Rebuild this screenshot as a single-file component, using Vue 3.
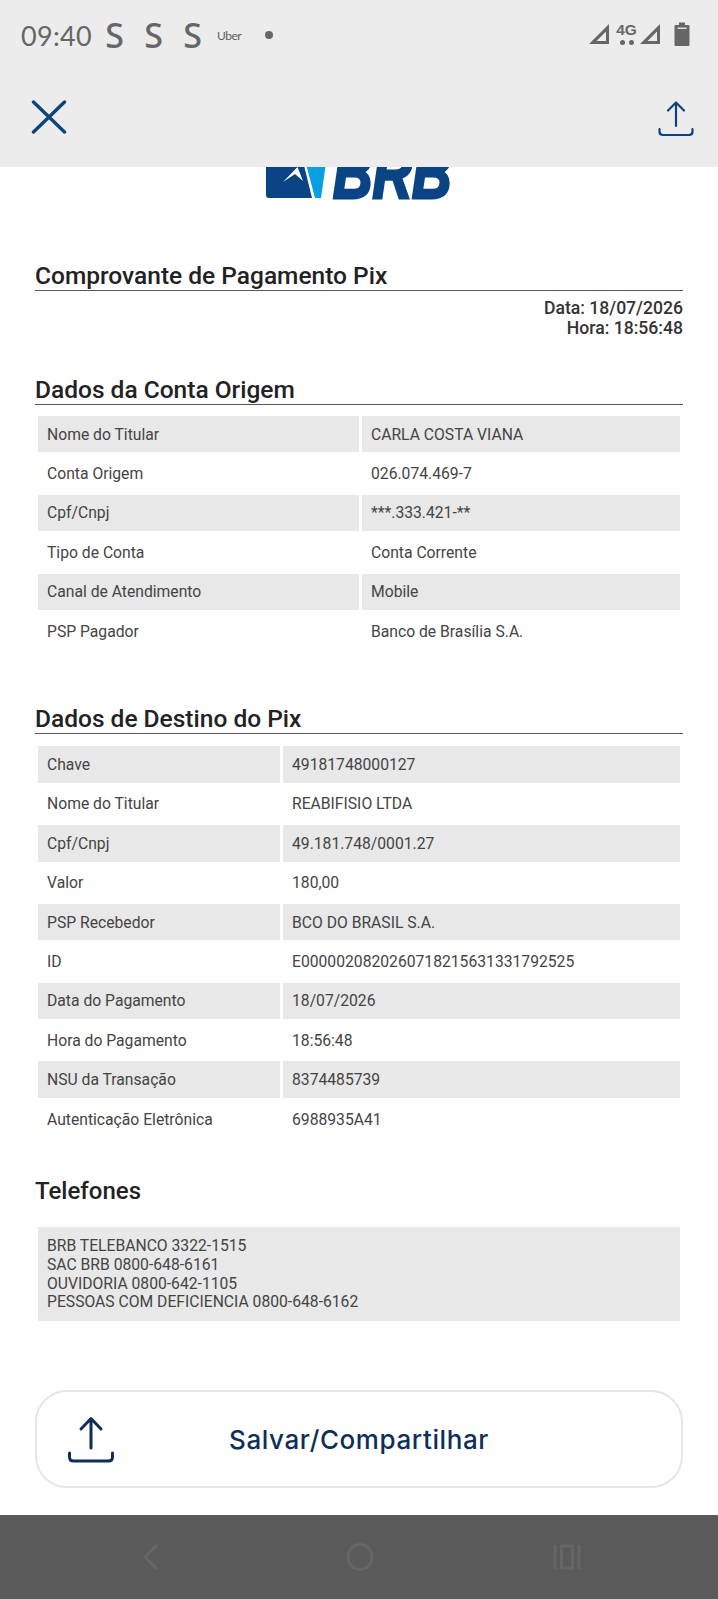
<script setup>
const origem = [
  ['Nome do Titular', 'CARLA COSTA VIANA'],
  ['Conta Origem', '026.074.469-7'],
  ['Cpf/Cnpj', '***.333.421-**'],
  ['Tipo de Conta', 'Conta Corrente'],
  ['Canal de Atendimento', 'Mobile'],
  ['PSP Pagador', 'Banco de Brasília S.A.'],
]
const destino = [
  ['Chave', '49181748000127'],
  ['Nome do Titular', 'REABIFISIO LTDA'],
  ['Cpf/Cnpj', '49.181.748/0001.27'],
  ['Valor', '180,00'],
  ['PSP Recebedor', 'BCO DO BRASIL S.A.'],
  ['ID', 'E0000020820260718215631331792525'],
  ['Data do Pagamento', '18/07/2026'],
  ['Hora do Pagamento', '18:56:48'],
  ['NSU da Transação', '8374485739'],
  ['Autenticação Eletrônica', '6988935A41'],
]
const telefones = [
  'BRB TELEBANCO 3322-1515',
  'SAC BRB 0800-648-6161',
  'OUVIDORIA 0800-642-1105',
  'PESSOAS COM DEFICIENCIA 0800-648-6162',
]
</script>

<template>
  <div class="screen">
    <header class="top">
      <div class="status">
        <span class="time">09:40</span>
        <span class="s first">S</span>
        <span class="s">S</span>
        <span class="s">S</span>
        <span class="uber">Uber</span>
        <span class="dot"></span>
        <span class="spacer"></span>
        <svg class="sig" width="22" height="22" viewBox="0 0 22 22"><path d="M21 1V21H1Z M18 8.500L8.500 18H18Z" fill="#666" fill-rule="evenodd"/></svg>
        <span class="net"><span class="g">4G</span><span class="arrows"><i></i><i></i></span></span>
        <svg class="sig" width="22" height="22" viewBox="0 0 22 22"><path d="M21 1V21H1Z M18 8.500L8.500 18H18Z" fill="#666" fill-rule="evenodd"/></svg>
        <svg class="bat" width="16" height="24" viewBox="0 0 16 24"><path d="M5 0.500H11V3H14.500Q15.500 3 15.500 4V23Q15.500 24 14.500 24H1.500Q0.500 24 0.500 23V4Q0.500 3 1.500 3H5Z" fill="#666"/><rect x="3.500" y="5.500" width="9" height="1.500" fill="#ddd"/></svg>
      </div>
      <div class="toolbar">
        <svg width="36" height="34" viewBox="0 0 36 34"><path d="M2.500 2L33.500 32M33.500 2L2.500 32" stroke="#0f4379" stroke-width="3.400" stroke-linecap="round" fill="none"/></svg>
        <svg width="36" height="37" viewBox="0 0 36 37"><path d="M18 3V26M10 10.500L18 2.500L26 10.500M1.500 29V31.500Q1.500 35 5 35H31Q34.500 35 34.500 31.500V29" stroke="#0f4379" stroke-width="2.200" stroke-linecap="round" stroke-linejoin="round" fill="none"/></svg>
      </div>
    </header>

    <main class="content">
      <div class="logo">
        <svg class="mark" width="62" height="50" viewBox="0 0 62 50">
          <path d="M3 0H34L46 49H3Q0 49 0 46V18Z" fill="#0a4484"/>
          <path d="M17 33L31.500 18L37 32L29 25Z" fill="#fff"/>
          <path d="M36 0H62L55 49H49Z" fill="#0a9fe2"/>
        </svg>
        <span class="letters">BRB</span>
      </div>

      <h2 class="title first">Comprovante de Pagamento Pix</h2>
      <div class="stamp">
        <div>Data: 18/07/2026</div>
        <div>Hora: 18:56:48</div>
      </div>

      <h2 class="title second">Dados da Conta Origem</h2>
      <div class="rows half">
        <div v-for="(r, i) in origem" :key="i" class="row" :class="{ shaded: i % 2 === 0 }">
          <div class="cell">{{ r[0] }}</div>
          <div class="cell">{{ r[1] }}</div>
        </div>
      </div>

      <h2 class="title third">Dados de Destino do Pix</h2>
      <div class="rows narrow">
        <div v-for="(r, i) in destino" :key="i" class="row" :class="{ shaded: i % 2 === 0 }">
          <div class="cell">{{ r[0] }}</div>
          <div class="cell">{{ r[1] }}</div>
        </div>
      </div>

      <h2 class="title plain">Telefones</h2>
      <div class="phones">
        <div v-for="t in telefones" :key="t">{{ t }}</div>
      </div>

      <button class="share">
        <svg class="share-icon" width="46" height="47" viewBox="0 0 46 47"><path d="M23 3V32M13 13L23 2.500L33 13M1.500 37V41Q1.500 45 5.500 45H40.500Q44.500 45 44.500 41V37" stroke="#0f2f57" stroke-width="3" stroke-linecap="round" stroke-linejoin="round" fill="none"/></svg>
        <span>Salvar/Compartilhar</span>
      </button>
    </main>

    <footer class="nav">
      <svg class="back" width="18" height="28" viewBox="0 0 18 28"><path d="M15 2L3 14L15 26" stroke="#666" stroke-width="3" fill="none"/></svg>
      <svg class="home" width="28" height="28" viewBox="0 0 28 28"><ellipse cx="14" cy="14" rx="12" ry="12.500" stroke="#666" stroke-width="3" fill="none"/></svg>
      <svg class="recent" width="28" height="26" viewBox="0 0 28 26"><path d="M2 1V25M26 1V25" stroke="#666" stroke-width="3" fill="none"/><rect x="8.500" y="2" width="11" height="22" stroke="#666" stroke-width="3" fill="none"/></svg>
    </footer>
  </div>
</template>

<style>
html, body { margin: 0; background: #fff; }
</style>

<style scoped>
.screen {
  width: 718px;
  height: 1599px;
  display: flex;
  flex-direction: column;
  overflow: hidden;
  font-family: Roboto, "Liberation Sans", sans-serif;
  background: #fff;
}
.top {
  height: 167px;
  background: #ececec;
  flex: none;
  position: relative;
  z-index: 2;
}
.status {
  height: 70px;
  padding: 0 28px 0 21px;
  display: flex;
  align-items: center;
  color: #666;
  font-family: Lato, sans-serif;
}
.time { font-size: 27px; font-weight: 400; width: 71px; letter-spacing: .3px; }
.s { font-size: 34px; font-weight: 500; width: 39px; text-align: center; font-family: "Noto Sans", sans-serif; }
.s.first { margin-left: 3px; }
.uber { font-size: 12px; width: 26px; margin-left: 5px; letter-spacing: -.5px; color: #5c5c5c; }
.dot { width: 8px; height: 8px; border-radius: 50%; background: #666; margin-left: 22px; }
.spacer { flex: 1; }
.sig { margin-top: -2px; }
.net { display: flex; flex-direction: column; align-items: center; width: 29px; box-sizing: border-box; padding-left: 4px; margin-top: -2px; }
.g { font: 700 15.500px/14px "Liberation Sans", sans-serif; }
.arrows { display: flex; gap: 4px; margin-top: 3px; }
.arrows i { width: 5px; height: 5px; background: #666; border-radius: 50%; }
.bat { margin-left: 13px; margin-top: -2px; }
.toolbar {
  height: 97px;
  padding: 0 24px 0 31px;
  display: flex;
  align-items: flex-start;
  justify-content: space-between;
}
.toolbar svg { margin-top: 30px; }
.content {
  flex: 1;
  padding: 0 35px;
  display: flex;
  flex-direction: column;
  min-height: 0;
}
.logo {
  margin: -18px 0 0 231px;
  display: flex;
  align-items: flex-end;
  height: 50px;
  gap: 5px;
}
.mark { flex: none; }
.letters {
  font: italic 700 72px/50px "Liberation Sans", sans-serif;
  color: #0a4484;
  -webkit-text-stroke: 3px #0a4484;
  height: 50px;
  transform: scaleX(.76);
  transform-origin: left bottom;
  display: block;
  margin-bottom: 1px;
}
.title {
  margin: 0;
  height: 32px;
  line-height: 33px;
  font-size: 24.500px;
  font-weight: 500;
  color: #222;
  border-bottom: 1px solid #555;
  box-sizing: border-box;
}
.title.first { margin-top: 60px; }
.title.second { margin-top: 35px; }
.title.third { margin-top: 53px; }
.title.plain { border: 0; margin-top: 39px; height: auto; font-size: 24px; line-height: 30px; }
.stamp {
  margin-top: 7px;
  text-align: right;
  font-size: 17.600px;
  line-height: 20px;
  font-weight: 500;
  color: #333;
}
.rows {
  margin: 12px 3px 0;
  display: grid;
  row-gap: 3px;
}
.half { margin-top: 11px; }
.row {
  display: grid;
  column-gap: 3px;
  height: 36.400px;
  align-items: center;
}
.half .row { grid-template-columns: 321px 318px; }
.narrow .row { grid-template-columns: 242px 397px; }
.cell {
  height: 100%;
  padding-left: 9px;
  display: flex;
  align-items: center;
  font-size: 15.700px;
  color: #444;
}
.shaded .cell { background: #e8e8e8; }
.phones {
  margin: 21px 3px 0;
  background: #e8e8e8;
  padding: 10px 9px;
  height: 94px;
  box-sizing: border-box;
  font-size: 15.700px;
  line-height: 18.700px;
  color: #444;
}
.share {
  margin-top: 69px;
  height: 98px;
  flex: none;
  border: 2px solid #e6e6e6;
  border-radius: 32px;
  background: #fff;
  position: relative;
  display: flex;
  align-items: center;
  justify-content: center;
  padding: 0;
  font: 500 26px Inter, sans-serif;
  letter-spacing: .6px;
  color: #0f2f57;
}
.share-icon { position: absolute; left: 31px; top: 24px; }
.nav {
  height: 84px;
  flex: none;
  background: #5a5a5a;
  display: flex;
  align-items: center;
  padding-left: 142px;
}
.home { margin-left: 186px; }
.recent { margin-left: 179px; }
</style>
